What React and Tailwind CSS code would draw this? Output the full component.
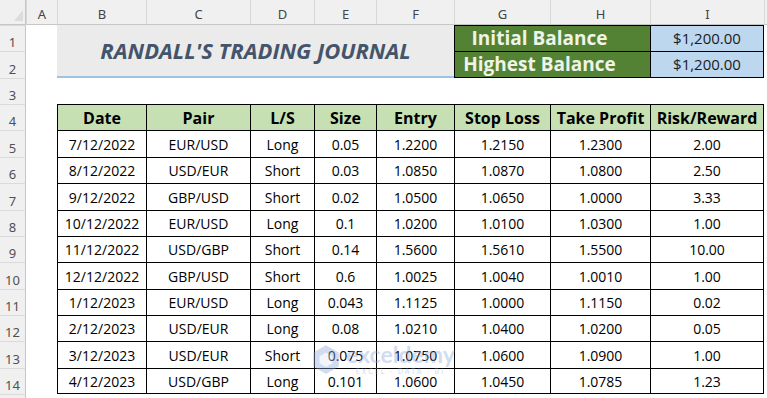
const COLS = ["A", "B", "C", "D", "E", "F", "G", "H", "I"];
const HEAD = ["Date", "Pair", "L/S", "Size", "Entry", "Stop Loss", "Take Profit", "Risk/Reward"];
const TRADES = [
  ["7/12/2022", "EUR/USD", "Long", "0.05", "1.2200", "1.2150", "1.2300", "2.00"],
  ["8/12/2022", "USD/EUR", "Short", "0.03", "1.0850", "1.0870", "1.0800", "2.50"],
  ["9/12/2022", "GBP/USD", "Short", "0.02", "1.0500", "1.0650", "1.0000", "3.33"],
  ["10/12/2022", "EUR/USD", "Long", "0.1", "1.0200", "1.0100", "1.0300", "1.00"],
  ["11/12/2022", "USD/GBP", "Short", "0.14", "1.5600", "1.5610", "1.5500", "10.00"],
  ["12/12/2022", "GBP/USD", "Short", "0.6", "1.0025", "1.0040", "1.0010", "1.00"],
  ["1/12/2023", "EUR/USD", "Long", "0.043", "1.1125", "1.0000", "1.1150", "0.02"],
  ["2/12/2023", "USD/EUR", "Long", "0.08", "1.0210", "1.0400", "1.0200", "0.05"],
  ["3/12/2023", "USD/EUR", "Short", "0.075", "1.0750", "1.0600", "1.0900", "1.00"],
  ["4/12/2023", "USD/GBP", "Long", "0.101", "1.0600", "1.0450", "1.0785", "1.23"],
];

function RowHead({ n }) {
  return (
    <div className="flex items-center justify-center overflow-hidden border-t border-r border-t-[#dadada] border-r-[#c6c6c6] bg-[#f0f0f0] pt-2 font-['Noto_Sans',sans-serif] text-[13px] leading-none text-[#505050]">
      {n}
    </div>
  );
}

function Cell({ children, last, bottom, head }) {
  return (
    <div
      className={
        "flex items-center justify-center border-t border-l border-black text-black " +
        (last ? "border-r " : "") +
        (bottom ? "border-b " : "") +
        (head ? "bg-[#c6e0b4] text-[16px] font-bold" : "bg-white text-[14px]")
      }
    >
      {children}
    </div>
  );
}

function Watermark() {
  return (
    <div className="pointer-events-none absolute left-[310px] top-[343px] flex items-center gap-1 opacity-40">
      <svg width="32" height="32" viewBox="0 0 30 30">
        <path d="M15 2 L27 9 L27 22 L15 29 L3 22 L3 9 Z" fill="#8fa9da" />
        <path d="M15 9 L21 12.5 L21 19 L15 22.5 L9 19 L9 12.5 Z" fill="#dfe7f6" />
      </svg>
      <div className="flex flex-col items-center leading-none">
        <span className="font-['Lato',sans-serif] text-[23px] font-bold text-[#8fa9da]">exceldemy</span>
        <span className="mt-[2px] font-['Lato',sans-serif] text-[7px] tracking-[2px] text-[#8fa9da]">EXCEL · DATA · BI</span>
      </div>
    </div>
  );
}

export default function App() {
  return (
    <div className="relative grid h-[398px] w-[767px] grid-cols-[26px_31px_89px_104px_64px_62px_78px_96px_100px_114px_1fr] grid-rows-[25px_26px_27px_26px_26px_27px_26px_27px_26px_26px_27px_26px_26px_27px_26px_1fr] overflow-hidden bg-white font-['Open_Sans',sans-serif]">
      {/* column headers */}
      <div className="relative border-r border-b border-r-[#c6c6c6] border-b-[#c6c6c6] bg-[#f0f0f0]">
        <svg className="absolute left-[14px] top-[10px]" width="9" height="11" viewBox="0 0 9 11">
          <path d="M9 0 L9 11 L0 11 Z" fill="#dcdcdc" />
        </svg>
      </div>
      {COLS.map((c) => (
        <div
          key={c}
          className="flex items-center justify-center border-l border-b border-l-[#d8d8d8] border-b-[#c6c6c6] bg-[#f0f0f0] pt-[5px] font-['Noto_Sans',sans-serif] text-[13px] leading-none text-[#444]"
        >
          {c}
        </div>
      ))}
      <div className="border-l border-b border-l-[#d8d8d8] border-b-[#c6c6c6] bg-[#f0f0f0]" />

      {/* row 1 */}
      <RowHead n={1} />
      <div />
      <div className="col-span-5 row-span-2 flex items-center justify-center border-b-2 border-b-[#9dc3e6] bg-[#ebebeb]">
        <span className="text-[22px] font-bold italic text-[#44546a]">RANDALL'S TRADING JOURNAL</span>
      </div>
      <div className="col-span-2 flex items-center justify-center border-t border-l border-black bg-[#548235] pr-[26px] text-[19px] font-bold text-[#eef5e8]">
        Initial Balance
      </div>
      <div className="flex items-center justify-center border-t border-l border-r border-black bg-[#bdd7ee] text-[15px] text-[#1b1b1b]">
        $1,200.00
      </div>
      <div />

      {/* row 2 */}
      <RowHead n={2} />
      <div />
      <div className="col-span-2 flex items-center justify-center border-t border-l border-b border-black bg-[#548235] pr-[26px] text-[19px] font-bold text-[#eef5e8]">
        Highest Balance
      </div>
      <div className="flex items-center justify-center border border-black bg-[#bdd7ee] text-[15px] text-[#1b1b1b]">
        $1,200.00
      </div>
      <div />

      {/* row 3 */}
      <RowHead n={3} />
      <div className="col-span-10" />

      {/* row 4: table head */}
      <RowHead n={4} />
      <div />
      {HEAD.map((h, i) => (
        <Cell key={h} head last={i === HEAD.length - 1}>
          {h}
        </Cell>
      ))}
      <div />

      {/* rows 5-14 */}
      {TRADES.map((row, r) => [
        <RowHead key={"h" + r} n={r + 5} />,
        <div key={"a" + r} />,
        ...row.map((v, i) => (
          <Cell key={r + "-" + i} last={i === row.length - 1} bottom={r === TRADES.length - 1}>
            {v}
          </Cell>
        )),
        <div key={"j" + r} />,
      ])}

      {/* row 15 (cut off) */}
      <RowHead n="" />
      <div className="col-span-10" />

      <Watermark />
    </div>
  );
}
